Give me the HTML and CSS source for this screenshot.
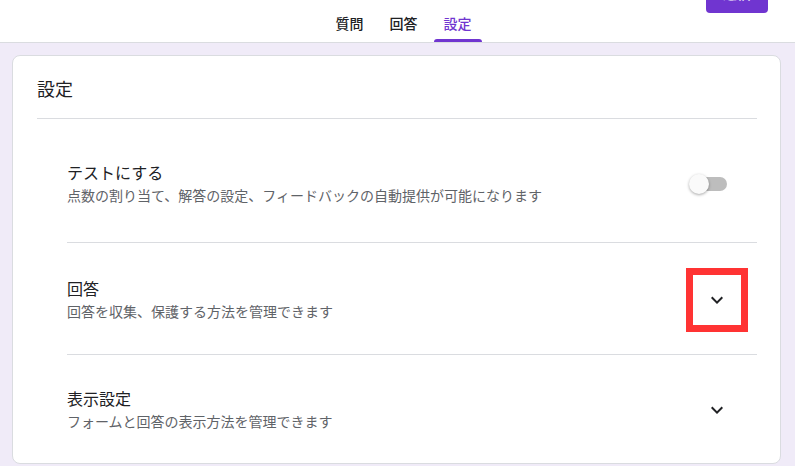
FILE: index.html
```html
<!DOCTYPE html>
<html lang="ja">
<head>
  <meta charset="UTF-8" />
  <meta name="viewport" content="width=device-width, initial-scale=1.0" />
  <title>設定</title>
  <link rel="stylesheet" href="styles.css">
</head>
<body>
  <header class="header">
    <div class="topbar">
      <button class="send-btn">送信</button>
    </div>
    <nav class="tabs">
      <div class="tab"><span class="tab-label">質問</span><span class="tab-bar"></span></div>
      <div class="tab"><span class="tab-label">回答</span><span class="tab-bar"></span></div>
      <div class="tab active"><span class="tab-label">設定</span><span class="tab-bar"></span></div>
    </nav>
  </header>

  <main class="main">
    <section class="card">
      <h2 class="card-title">設定</h2>
      <div class="rows">
        <div class="row">
          <div class="row-text">
            <div class="row-title">テストにする</div>
            <div class="row-desc">点数の割り当て、解答の設定、フィードバックの自動提供が可能になります</div>
          </div>
          <div class="switch"><span class="thumb"></span></div>
        </div>
        <div class="row">
          <div class="row-text">
            <div class="row-title">回答</div>
            <div class="row-desc">回答を収集、保護する方法を管理できます</div>
          </div>
          <div class="expand highlight">
            <svg width="24" height="24" viewBox="0 0 24 24"><path d="M16.59 8.59L12 13.17 7.41 8.59 6 10l6 6 6-6z" fill="#202124"/></svg>
          </div>
        </div>
        <div class="row">
          <div class="row-text">
            <div class="row-title">表示設定</div>
            <div class="row-desc">フォームと回答の表示方法を管理できます</div>
          </div>
          <div class="expand">
            <svg width="24" height="24" viewBox="0 0 24 24"><path d="M16.59 8.59L12 13.17 7.41 8.59 6 10l6 6 6-6z" fill="#202124"/></svg>
          </div>
        </div>
      </div>
    </section>
  </main>
</body>
</html>
```

FILE: styles.css
```css
html, body {
  margin: 0;
  height: 100%;
  overflow: hidden;
}
body {
  background-color: #f0ebf8;
  font-family: Roboto, "Noto Sans CJK JP", sans-serif;
  color: #202124;
}
.header {
  background: #fff;
  border-bottom: 1px solid #dadce0;
  margin-top: -23px;
}
.topbar {
  display: flex;
  justify-content: flex-end;
  height: 36px;
  padding-right: 27px;
}
.send-btn {
  height: 36px;
  width: 62px;
  padding: 0 0 5px;
  background: #7035d0;
  color: #fff;
  border: none;
  border-radius: 4px;
  font-family: inherit;
  font-size: 14px;
  font-weight: 500;
}
.tabs {
  display: flex;
  justify-content: center;
  gap: 6px;
  padding-left: 12px;
}
.tab {
  display: flex;
  flex-direction: column;
  align-items: center;
  height: 29px;
  width: 48px;
}
.tab-label {
  margin-top: 1px;
  font-size: 14px;
  line-height: 20px;
  font-weight: 500;
  color: #202124;
}
.tab-bar {
  margin-top: auto;
  width: 100%;
  height: 3px;
  border-radius: 3px 3px 0 0;
}
.tab.active .tab-label {
  color: #7035d0;
}
.tab.active .tab-bar {
  background: #7035d0;
}
.main {
  padding: 12px 14px 0 12px;
}
.card {
  background: #fff;
  border: 1px solid #dadce0;
  border-radius: 8px;
  padding: 0 23px 0 24px;
}
.card-title {
  margin: 0;
  padding: 22px 0 16px;
  font-size: 18px;
  line-height: 24px;
  font-weight: 400;
  border-bottom: 1px solid #dadce0;
}
.rows {
  padding-left: 30px;
}
.row {
  display: flex;
  align-items: center;
  justify-content: space-between;
  min-height: 111px;
  box-sizing: border-box;
  padding: 25px 0 22px;
  border-bottom: 1px solid #dadce0;
}
.row:first-child {
  min-height: 124px;
  padding: 33px 0 26px;
}
.row:last-child {
  border-bottom: none;
  padding: 23px 0 21px;
  min-height: 108px;
}
.row-title {
  font-size: 16px;
  line-height: 24px;
}
.row-desc {
  font-size: 14px;
  line-height: 20px;
  color: #5f6368;
}
.switch {
  display: flex;
  align-items: center;
  width: 34px;
  height: 14px;
  border-radius: 7px;
  background: #bdbdbd;
  margin-right: 30px;
}
.thumb {
  width: 20px;
  height: 20px;
  border-radius: 50%;
  background: #fafafa;
  margin-left: -4px;
  box-shadow: 0 1px 3px rgba(0, 0, 0, 0.35);
}
.expand {
  display: flex;
  align-items: center;
  justify-content: center;
  width: 62px;
  height: 64px;
  box-sizing: border-box;
  border: 7px solid transparent;
  margin-right: 9px;
}
.expand.highlight {
  border-color: #ff3333;
}
```
